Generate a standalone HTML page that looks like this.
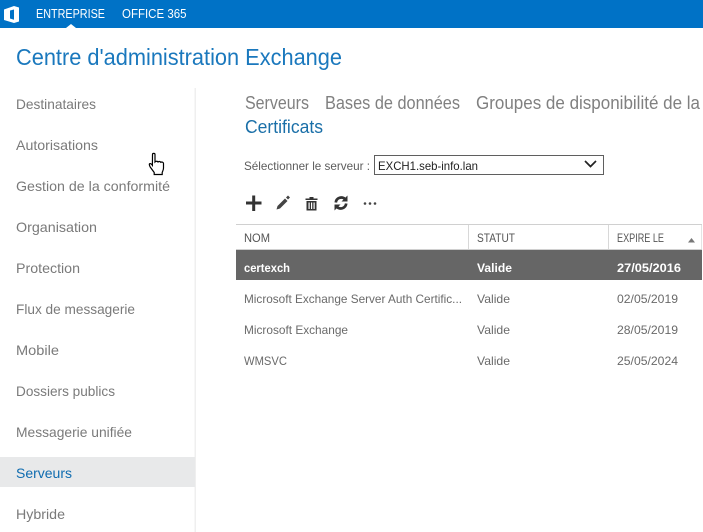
<!DOCTYPE html>
<html lang="fr"><head><meta charset="utf-8"><title>Centre d'administration Exchange</title>
<style>
html,body{margin:0;padding:0;background:#fff;overflow:hidden}
svg{display:block;font-family:"Liberation Sans",sans-serif}
.nav{font-size:14px;fill:#7a7a7a}
.tab{font-size:18px;fill:#808080}
.cell{font-size:12px;fill:#6a6a6a}
.sel{font-size:12px;fill:#fff;font-weight:bold}
.hd{font-size:12px;fill:#555}
</style></head><body>
<svg width="703" height="532" viewBox="0 0 703 532" xmlns="http://www.w3.org/2000/svg">
<rect width="703" height="28" fill="#0072c6"/>
<path d="M66 28l5-4 5 4z" fill="#fff"/>
<path d="M4 9.500L14 6l5 1.500v14l-5 1.500-10-3zM14 9.500l-4 1v8l4 1.200z" fill="#fff" fill-rule="evenodd"/>
<text x="36" y="18" font-size="13" fill="#fff" textLength="69" lengthAdjust="spacingAndGlyphs">ENTREPRISE</text>
<text x="122" y="18" font-size="13" fill="#fff" textLength="64.500" lengthAdjust="spacingAndGlyphs">OFFICE 365</text>
<text x="16" y="65" font-size="23" fill="#1a78bd" textLength="326" lengthAdjust="spacingAndGlyphs">Centre d'administration Exchange</text>

<rect x="194.500" y="88" width="1.500" height="444" fill="#efefef"/>
<rect x="0" y="457" width="195" height="30" fill="#e8e9ea"/>
<text class="nav" x="16" y="109" textLength="80" lengthAdjust="spacingAndGlyphs">Destinataires</text>
<text class="nav" x="16" y="150" textLength="82" lengthAdjust="spacingAndGlyphs">Autorisations</text>
<text class="nav" x="16" y="191" textLength="154" lengthAdjust="spacingAndGlyphs">Gestion de la conformité</text>
<text class="nav" x="16" y="232" textLength="81" lengthAdjust="spacingAndGlyphs">Organisation</text>
<text class="nav" x="16" y="273" textLength="64" lengthAdjust="spacingAndGlyphs">Protection</text>
<text class="nav" x="16" y="314" textLength="119" lengthAdjust="spacingAndGlyphs">Flux de messagerie</text>
<text class="nav" x="16" y="355" textLength="43" lengthAdjust="spacingAndGlyphs">Mobile</text>
<text class="nav" x="16" y="396" textLength="99" lengthAdjust="spacingAndGlyphs">Dossiers publics</text>
<text class="nav" x="16" y="437" textLength="116" lengthAdjust="spacingAndGlyphs">Messagerie unifiée</text>
<text class="nav" x="16" y="478" textLength="56" lengthAdjust="spacingAndGlyphs" style="fill:#0f6cb0">Serveurs</text>
<text class="nav" x="16" y="519" textLength="49" lengthAdjust="spacingAndGlyphs">Hybride</text>

<text class="tab" x="245" y="109" textLength="64" lengthAdjust="spacingAndGlyphs">Serveurs</text>
<text class="tab" x="325" y="109" textLength="135" lengthAdjust="spacingAndGlyphs">Bases de données</text>
<text class="tab" x="476" y="109" textLength="224" lengthAdjust="spacingAndGlyphs">Groupes de disponibilité de la</text>
<text class="tab" x="245" y="133" textLength="78" lengthAdjust="spacingAndGlyphs" style="fill:#1a6fa8">Certificats</text>

<text x="244" y="170" font-size="12" fill="#5c5c5c" textLength="126" lengthAdjust="spacingAndGlyphs">Sélectionner le serveur :</text>
<rect x="374.500" y="155.500" width="229" height="19" fill="#fff" stroke="#5f5f5f"/>
<text x="378" y="170" font-size="12" fill="#222" textLength="100" lengthAdjust="spacingAndGlyphs">EXCH1.seb-info.lan</text>
<path d="M585 161l5.500 5.500 5.500-5.500" fill="none" stroke="#222" stroke-width="1.700"/>

<path d="M246 203h15.500M253.700 195.500v15.500" stroke="#333" stroke-width="3" fill="none"/>
<path d="M276.500 209.500l1-3.500 7.500-7.500 2.500 2.500-7.500 7.500z" fill="#444"/>
<path d="M286 197.500l2-2 2 2-2 2z" fill="#444"/>
<path d="M305.500 198.500h12v1.500h-12zM309.500 197h4v1.500h-4z" fill="#333"/>
<path d="M306.500 201h10v9.500h-10zM308.500 202.500v6.500h1.200v-6.500zM311 202.500v6.500h1.200v-6.500zM313.500 202.500v6.500h1.200v-6.500z" fill="#333" fill-rule="evenodd"/>
<path d="M335.800 202.500a5.500 5.500 0 0 1 9.200-3.500" fill="none" stroke="#333" stroke-width="2.700"/>
<path d="M347.500 195.500v6h-6z" fill="#333"/>
<path d="M346.200 203.500a5.500 5.500 0 0 1-9.200 3.500" fill="none" stroke="#333" stroke-width="2.700"/>
<path d="M334.500 210.500v-6h6z" fill="#333"/>
<circle cx="365" cy="203.500" r="1.300" fill="#444"/><circle cx="370" cy="203.500" r="1.300" fill="#444"/><circle cx="375" cy="203.500" r="1.300" fill="#444"/>

<rect x="236" y="224" width="466" height="1" fill="#d0d0d0"/>
<rect x="468" y="225" width="1" height="24" fill="#d8d8d8"/>
<rect x="608" y="225" width="1" height="24" fill="#d8d8d8"/>
<rect x="701" y="225" width="1" height="24" fill="#e4e4e4"/>
<rect x="236" y="249" width="466" height="1" fill="#d0d0d0"/>
<text class="hd" x="244" y="242" textLength="26" lengthAdjust="spacingAndGlyphs">NOM</text>
<text class="hd" x="477" y="242" textLength="38" lengthAdjust="spacingAndGlyphs">STATUT</text>
<text class="hd" x="617" y="242" textLength="47" lengthAdjust="spacingAndGlyphs">EXPIRE LE</text>
<path d="M688 242.500l3.500-4.500 3.500 4.500z" fill="#777"/>

<rect x="236" y="250" width="466" height="30" fill="#666"/>
<text class="sel" x="244" y="272" textLength="46" lengthAdjust="spacingAndGlyphs">certexch</text>
<text class="sel" x="477" y="272" textLength="35" lengthAdjust="spacingAndGlyphs">Valide</text>
<text class="sel" x="617" y="272" textLength="64" lengthAdjust="spacingAndGlyphs">27/05/2016</text>
<text class="cell" x="244" y="303" textLength="218" lengthAdjust="spacingAndGlyphs">Microsoft Exchange Server Auth Certific...</text>
<text class="cell" x="477" y="303" textLength="33" lengthAdjust="spacingAndGlyphs">Valide</text>
<text class="cell" x="617" y="303" textLength="61" lengthAdjust="spacingAndGlyphs">02/05/2019</text>
<text class="cell" x="244" y="334" textLength="104" lengthAdjust="spacingAndGlyphs">Microsoft Exchange</text>
<text class="cell" x="477" y="334" textLength="33" lengthAdjust="spacingAndGlyphs">Valide</text>
<text class="cell" x="617" y="334" textLength="61" lengthAdjust="spacingAndGlyphs">28/05/2019</text>
<text class="cell" x="244" y="365" textLength="43" lengthAdjust="spacingAndGlyphs">WMSVC</text>
<text class="cell" x="477" y="365" textLength="33" lengthAdjust="spacingAndGlyphs">Valide</text>
<text class="cell" x="617" y="365" textLength="61" lengthAdjust="spacingAndGlyphs">25/05/2024</text>

<path d="M152.500 154.500c0-1.500 2.500-1.500 2.500 0v7.500c1-1 2.500-1 3 0 1-.8 2.300-.6 2.800.3 1-.6 2.700-.2 2.700 1.200v4.500c0 2-.8 3-1.300 4.500v2h-8v-2l-4-5.500c-.8-1.500-1-2.500-.8-3 .5-.8 1.800-.5 3 1.300z" fill="#fff" stroke="#000" stroke-width="1.200"/>
</svg>
</body></html>
